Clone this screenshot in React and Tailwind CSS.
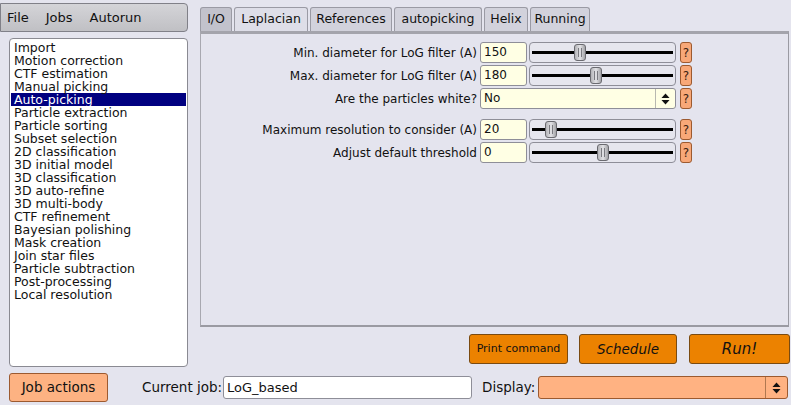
import React from "react";

const jobs = [
  "Import",
  "Motion correction",
  "CTF estimation",
  "Manual picking",
  "Auto-picking",
  "Particle extraction",
  "Particle sorting",
  "Subset selection",
  "2D classification",
  "3D initial model",
  "3D classification",
  "3D auto-refine",
  "3D multi-body",
  "CTF refinement",
  "Bayesian polishing",
  "Mask creation",
  "Join star files",
  "Particle subtraction",
  "Post-processing",
  "Local resolution",
];

const tabs = [
  { name: "I/O", cls: "w-[32px] bg-[#c2c2cc]" },
  { name: "Laplacian", cls: "w-[74px] bg-[#dedee8]" },
  { name: "References", cls: "w-[82px] bg-[#d2d2dc]" },
  { name: "autopicking", cls: "w-[88px] bg-[#d2d2dc]" },
  { name: "Helix", cls: "w-[44px] bg-[#d2d2dc]" },
  { name: "Running", cls: "w-[60px] bg-[#d2d2dc]" },
];

const HelpButton = () => (
  <div className="ml-[4px] w-[12px] h-[21px] rounded-[3px] border border-[#9c5a30] bg-[#f8a878] flex items-center justify-center text-[12px] leading-none text-[#3a2010]">
    ?
  </div>
);

const UpDown = () => (
  <svg width="9" height="12" viewBox="0 0 9 12">
    <polygon points="0.5,5 8.5,5 4.5,0.5" fill="#111" />
    <polygon points="0.5,7 8.5,7 4.5,11.5" fill="#111" />
  </svg>
);

const Slider = ({ pos }) => (
  <div className="relative ml-[2px] w-[147px] h-[21px] rounded-[4px] border border-[#8e8e98] bg-[#e6e6ee]">
    <div className="absolute left-[2px] right-[2px] top-[8px] h-[3px] bg-black" />
    <div
      className="absolute top-[1px] w-[12px] h-[17px] rounded-[3px] border border-[#6a6a70] bg-gradient-to-r from-[#b4b4b8] via-[#e2e2e6] to-[#a4a4a8] flex justify-center"
      style={{ left: pos - 529 - 7 }}
    >
      <div className="mt-[3px] w-[4px] h-[9px] border-x border-[#7a7a80]" />
    </div>
  </div>
);

const Row = ({ label, value, pos, className }) => (
  <div className={"flex items-center h-[21px] " + (className || "")}>
    <div className="w-[280px] pr-[3px] text-right whitespace-nowrap">{label}</div>
    <div className="w-[47px] h-[21px] rounded-[3px] border border-[#8e8e98] bg-[#ffffe4] pl-[3px] leading-[19px]">
      {value}
    </div>
    <Slider pos={pos} />
    <HelpButton />
  </div>
);

export default function App() {
  return (
    <div
      className="w-[791px] h-[405px] bg-[#e4e4ee] overflow-hidden text-[12px] text-[#111] flex flex-col"
      style={{ fontFamily: '"DejaVu Sans", sans-serif' }}
    >
      <div className="flex h-[367px]">
        {/* left column */}
        <div className="w-[188px] flex flex-col">
          <div className="mt-[3px] h-[29px] rounded-r-[4px] border border-[#808088] bg-gradient-to-b from-[#d4d4d8] to-[#c0c0c4] flex items-center text-[13px] pl-[6px] gap-[17px]">
            <span>File</span>
            <span>Jobs</span>
            <span>Autorun</span>
          </div>
          <div className="mt-[6px] ml-[9px] flex-1 rounded-[4px] border border-[#8a8a92] bg-white pt-[2px] px-[1px] leading-[13px] text-[12.5px]">
            {jobs.map((j) => (
              <div
                key={j}
                className={
                  "h-[13px] pl-[3px] " +
                  (j === "Auto-picking" ? "bg-[#000080] text-white" : "")
                }
              >
                {j}
              </div>
            ))}
          </div>
        </div>

        {/* right column */}
        <div className="ml-[12px] flex-1 flex flex-col">
          <div className="mt-[7px] flex gap-[2px] h-[24px]">
            {tabs.map((t) => (
              <div
                key={t.name}
                className={
                  "rounded-t-[3px] border border-b-0 border-[#9a9aa4] flex items-center justify-center text-[12.5px] " +
                  t.cls
                }
              >
                {t.name}
              </div>
            ))}
          </div>
          <div className="w-[589px] h-[296px] border-t-[3px] border-t-[#a4a4ac] border-l border-l-[#a8a8b0] border-r border-r-[#9a9aa2] border-b-2 border-b-[#9a9aa2] bg-[#e4e4ee] pt-[8px]">
            <div className="flex flex-col ml-[-1px]">
              <Row label="Min. diameter for LoG filter (A)" value="150" pos={580} />
              <Row label="Max. diameter for LoG filter (A)" value="180" pos={596} className="mt-[2px]" />
              <div className="flex items-center h-[21px] mt-[2px]">
                <div className="w-[280px] pr-[3px] text-right whitespace-nowrap">Are the particles white?</div>
                <div className="w-[196px] h-[21px] rounded-[3px] border border-[#8e8e98] bg-[#ffffe4] flex">
                  <div className="flex-1 pl-[3px] leading-[19px]">No</div>
                  <div className="w-[20px] border-l border-[#b8b8b0] flex items-center justify-center">
                    <UpDown />
                  </div>
                </div>
                <HelpButton />
              </div>
              <Row label="Maximum resolution to consider (A)" value="20" pos={551} className="mt-[10px]" />
              <Row label="Adjust default threshold" value="0" pos={603} className="mt-[2px]" />
            </div>
          </div>
          <div className="mt-[7px] flex h-[30px] ml-[269px]">
            <div className="w-[99px] rounded-[3px] border border-[#7a4a10] bg-[#ec8200] flex items-center justify-center text-[11px]">
              Print command
            </div>
            <div className="ml-[11px] w-[98px] rounded-[3px] border border-[#7a4a10] bg-[#ec8200] flex items-center justify-center text-[13.5px] italic">
              Schedule
            </div>
            <div className="ml-[12px] w-[101px] rounded-[3px] border border-[#7a4a10] bg-[#ec8200] flex items-center justify-center text-[15px] italic">
              Run!
            </div>
          </div>
        </div>
      </div>

      {/* bottom row */}
      <div className="mt-[6px] flex items-center h-[29px]">
        <div className="ml-[9px] w-[99px] h-[29px] rounded-[3px] border border-[#9c5a30] bg-[#fdb282] flex items-center justify-center text-[13.5px]">
          Job actions
        </div>
        <div className="ml-[34px] w-[81px] text-[13.5px] whitespace-nowrap">Current job:</div>
        <div className="w-[249px] h-[23px] rounded-[3px] border border-[#8e8e98] bg-white pl-[3px] leading-[21px] text-[13px]">
          LoG_based
        </div>
        <div className="ml-[10px] w-[56px] text-[13.5px]">Display:</div>
        <div className="w-[250px] h-[23px] rounded-[3px] border border-[#9c5a30] bg-[#ffb282] flex justify-end">
          <div className="w-[22px] border-l border-[#b07850] flex items-center justify-center">
            <UpDown />
          </div>
        </div>
      </div>
    </div>
  );
}
